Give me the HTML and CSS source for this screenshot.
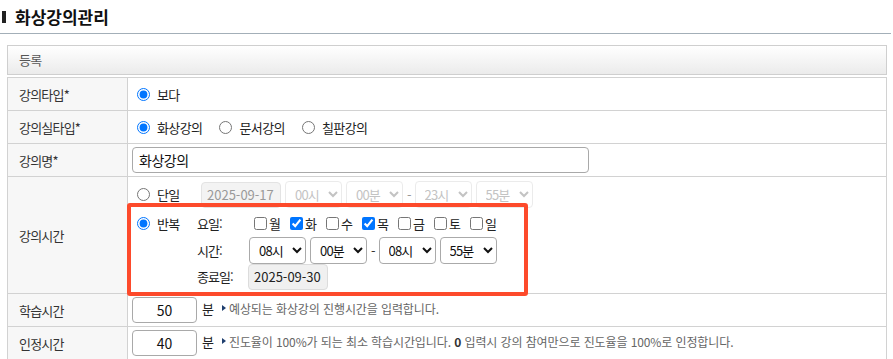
FILE: index.html
```html
<!DOCTYPE html>
<html lang="ko">
<head>
<meta charset="utf-8">
<title>화상강의관리</title>
<link rel="stylesheet" href="styles.css">
</head>
<body>
<h2 class="page-title"><span class="mark"></span>화상강의관리</h2>
<div class="panel">
  <div class="panel-head">등록</div>
  <table class="form">
    <tr>
      <th>강의타입*</th>
      <td><div class="opts"><label class="opt"><input type="radio" name="t1" checked>보다</label></div></td>
    </tr>
    <tr>
      <th>강의실타입*</th>
      <td><div class="opts">
        <label class="opt"><input type="radio" name="t2" checked>화상강의</label>
        <label class="opt"><input type="radio" name="t2">문서강의</label>
        <label class="opt"><input type="radio" name="t2">칠판강의</label>
      </div></td>
    </tr>
    <tr>
      <th>강의명*</th>
      <td><input class="text name" type="text" value="화상강의"></td>
    </tr>
    <tr class="tall">
      <th>강의시간</th>
      <td>
        <div class="time">
          <div class="line first">
            <label class="opt lw1"><input type="radio" name="t3">단일</label>
            <input class="date" type="text" value="2025-09-17" disabled>
            <select class="sel" disabled><option>00시</option></select>
            <select class="sel" disabled><option>00분</option></select>
            <span class="dash dis">-</span>
            <select class="sel" disabled><option>23시</option></select>
            <select class="sel" disabled><option>55분</option></select>
          </div>
          <div class="repeat">
            <label class="opt lw2"><input type="radio" name="t3" checked>반복</label>
            <div class="rgrid">
              <span class="key">요일:</span>
              <div class="checks">
                <label class="chk"><input type="checkbox">월</label>
                <label class="chk"><input type="checkbox" checked>화</label>
                <label class="chk"><input type="checkbox">수</label>
                <label class="chk"><input type="checkbox" checked>목</label>
                <label class="chk"><input type="checkbox">금</label>
                <label class="chk"><input type="checkbox">토</label>
                <label class="chk"><input type="checkbox">일</label>
              </div>
              <span class="key">시간:</span>
              <div class="sels">
                <select class="sel"><option>08시</option></select>
                <select class="sel"><option>00분</option></select>
                <span class="dash">-</span>
                <select class="sel"><option>08시</option></select>
                <select class="sel"><option>55분</option></select>
              </div>
              <span class="key">종료일:</span>
              <div><input class="date ro" type="text" value="2025-09-30" readonly></div>
            </div>
            <div class="highlight"></div>
          </div>
        </div>
      </td>
    </tr>
    <tr>
      <th>학습시간</th>
      <td><div class="inline"><input class="text num" type="text" value="50"><span class="unit">분</span><span class="arrow"></span><span class="desc">예상되는 화상강의 진행시간을 입력합니다.</span></div></td>
    </tr>
    <tr>
      <th>인정시간</th>
      <td><div class="inline"><input class="text num" type="text" value="40"><span class="unit">분</span><span class="arrow"></span><span class="desc">진도율이 100%가 되는 최소 학습시간입니다. <b>0</b> 입력시 강의 참여만으로 진도율을 100%로 인정합니다.</span></div></td>
    </tr>
  </table>
</div>
</body>
</html>
```

FILE: styles.css
```css
* { box-sizing: border-box; }
body {
  margin: 0;
  width: 893px;
  font-family: "Noto Sans CJK KR", "Noto Sans", sans-serif;
  font-size: 13px;
  color: #222;
  background: #fff;
  overflow: hidden;
}
.page-title {
  margin: 0;
  width: 891px;
  height: 34px;
  padding-left: 2px;
  display: flex;
  align-items: center;
  font-size: 17px;
  font-weight: bold;
  color: #111;
  letter-spacing: 0;
  border-bottom: 1px solid #a3afb8;
}
.page-title .mark {
  display: inline-block;
  width: 4px;
  height: 12px;
  background: #222;
  margin-right: 9px;
}
.panel {
  margin: 11px 0 0 7px;
  width: 880px;
}
.panel-head {
  height: 30px;
  border: 1px solid #cfcfcf;
  background: linear-gradient(#ffffff, #ebebeb);
  padding-left: 11px;
  line-height: 27px;
  font-size: 13px;
  color: #555;
  letter-spacing: -0.8px;
}
.form {
  margin-top: 2px;
  width: 880px;
  border-collapse: collapse;
}
.form th, .form td {
  border: 1px solid #d2d2d2;
  height: 33px;
  padding: 0;
}
.form th {
  width: 120px;
  background: #f7f7f7;
  text-align: left;
  font-weight: normal;
  padding-left: 11px;
  color: #333;
  font-size: 13px;
  letter-spacing: -0.8px;
}
.form td {
  padding-left: 4px;
  background: #fff;
}
.form tr.tall td, .form tr.tall th { height: 117px; }
.opts { display: flex; align-items: center; padding-left: 5px; }
.opt {
  display: inline-flex;
  align-items: center;
  margin-right: 17px;
  letter-spacing: -0.6px;
  color: #222;
}
.opt input {
  margin: 0 7px 0 0;
  width: 13px;
  height: 13px;
}
.text {
  height: 26px;
  border: 1px solid #a9a9a9;
  border-radius: 4px;
  font-family: inherit;
  font-size: 14px;
  color: #111;
  padding: 0 6px;
  letter-spacing: -0.5px;
}
.name { width: 457px; }
.time { position: relative; padding: 4px 0 3px 5px; }
.line { display: flex; align-items: center; height: 26px; }
.lw1 { width: 64px; margin-right: 0; }
.lw2 { width: 60px; margin-right: 0; align-self: flex-start; height: 27px; }
.date {
  width: 80px;
  height: 26px;
  border: 1px solid #e3e3e3;
  border-radius: 4px;
  background: #f3f3f3;
  font-family: inherit;
  font-size: 13px;
  padding: 0 0 0 5px;
  color: #999;
  margin-right: 4px;
}
.date.ro { color: #222; background: #f0f0f0; border-color: #dcdcdc; margin-left: -1px; }
.sel {
  width: 57px;
  height: 27px;
  margin-right: 4px;
  border: 1px solid #aaa;
  border-radius: 4px;
  background: #fff;
  font-family: inherit;
  font-size: 13px;
  color: #111;
  padding: 0 0 0 5px;
  letter-spacing: -0.8px;
}
.sel:disabled { color: #aaa; border-color: #e3e3e3; }
.dash { margin: 0 3px 0 0; color: #333; }
.dash.dis { color: #999; }
.repeat {
  position: relative;
  display: flex;
  margin-top: 2px;
}
.rgrid {
  display: grid;
  grid-template-columns: 52px auto;
  grid-template-rows: 27px 27px 26px;
  align-items: center;
}
.key { letter-spacing: -1px; color: #222; }
.checks { display: flex; align-items: center; padding-left: 5px; }
.chk {
  display: inline-flex;
  align-items: center;
  width: 36px;
  letter-spacing: -1px;
}
.chk input { margin: 0 2px 0 0; width: 13px; height: 13px; }
.sels { display: flex; align-items: center; }
.highlight {
  position: absolute;
  left: -10px;
  top: -7px;
  width: 401px;
  height: 93px;
  border: 4px solid #fd4a2b;
  border-radius: 3px;
  pointer-events: none;
}
.inline { display: flex; align-items: center; }
.num { width: 65px; text-align: center; padding: 0; letter-spacing: 0; }
.unit { margin: 0 8px 0 5px; color: #222; position: relative; top: -2px; }
.arrow {
  width: 0;
  height: 0;
  border-top: 3.5px solid transparent;
  border-bottom: 3.5px solid transparent;
  border-left: 4px solid #1f3f6e;
  margin-right: 3px;
  position: relative;
  top: -2px;
}
.desc {
  font-size: 12px;
  color: #666;
  letter-spacing: -0.1px;
  position: relative;
  top: -2px;
}
.desc b { color: #333; }
```
